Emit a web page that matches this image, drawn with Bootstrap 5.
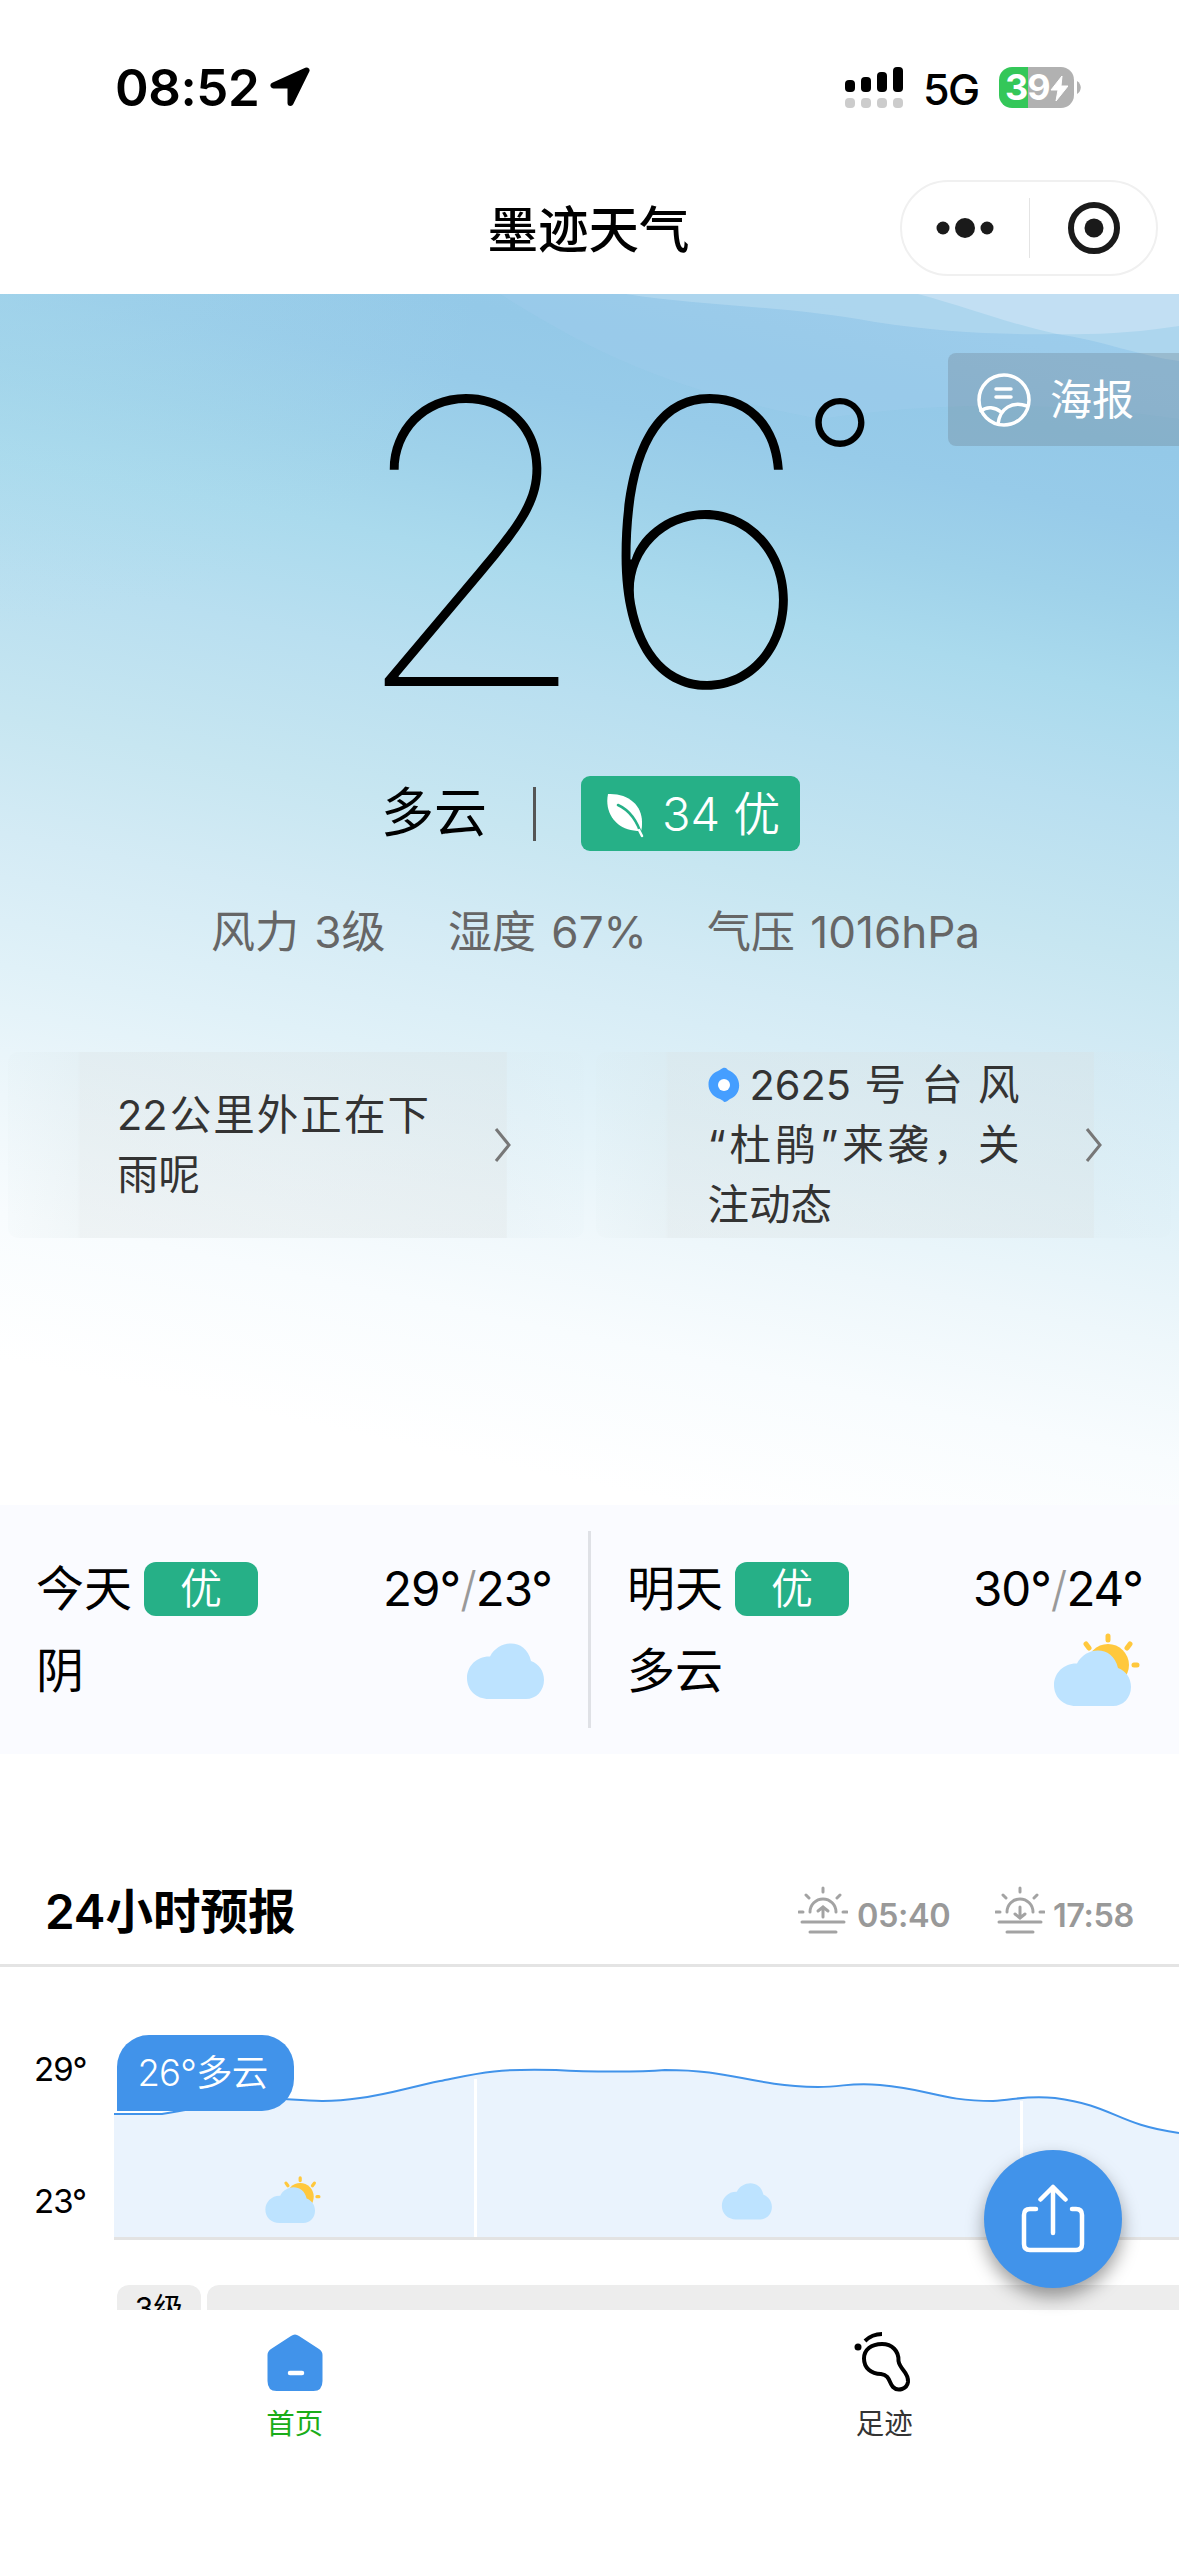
<!DOCTYPE html>
<html lang="zh-CN">
<head>
<meta charset="utf-8">
<meta name="viewport" content="width=device-width, initial-scale=1">
<title>墨迹天气</title>
<link href="https://cdn.jsdelivr.net/npm/bootstrap@5.3.0/dist/css/bootstrap.min.css" rel="stylesheet">
<style>
body{width:1179px;height:2556px;overflow:hidden;background:#fff;color:#000;font-family:Inter,"Noto Sans CJK SC",sans-serif;line-height:1}
svg{display:block;flex:none}
.text-nowrap-all *{white-space:nowrap}
.statusbar{height:160px;padding:67px 98px 0 115px}
.clock{font-size:51px;font-weight:600;line-height:42px;width:155px;letter-spacing:-.4px}
.net{font-size:43px;font-weight:450;line-height:44px;margin-left:18px;width:76px;letter-spacing:-1.500px}
.batt{width:75px;height:41px;border-radius:13px;background:linear-gradient(90deg,#34c759 39%,#b1b1b1 39%);color:#fff;font-size:36px;font-weight:700;line-height:41px;padding-left:6px;letter-spacing:-1px}
.titlebar{height:134px}
.titlebar h1{font-size:50.500px;font-weight:500;padding-top:43px;line-height:54px;margin:0 2px 0 0}
.capsule{top:20px;right:21px;width:258px;height:96px;border:2px solid #f0f0f0;border-radius:48px}
.capsule .bar{width:1px;height:60px;background:#e4e4e4}
.hero{height:1211px;background:radial-gradient(ellipse 480px 330px at 0 0,rgba(172,220,236,.38),rgba(172,220,236,0)),linear-gradient(192deg,#9ccdec 0%,#94c9e8 11%,#97cbe9 16%,#9fd2ea 22%,#aadaed 28%,#b9dff0 36%,#c7e6f1 46%,#d4ebf5 54%,#e0f1f8 63%,#eef7fb 72%,#f8fcfe 80%,#fff 90%)}
.poster{top:59px;right:0;width:231px;height:93px;background:rgba(90,100,110,.24);border-radius:8px 0 0 8px;color:#fff;font-size:42px;padding-left:29px;gap:19px}
.degrees{position:relative;height:482px;padding-top:48px;font-weight:100;font-size:396px;line-height:400px;padding-left:348px;letter-spacing:-1px}
.degrees .unit{font-size:160px;line-height:160px;font-weight:200;margin:36px 0 0 -12px;letter-spacing:0}
.now{height:75px;font-size:53px;padding-left:381px}
.now .sep{width:3px;height:54px;background:#555;margin:0 45px 0 46px}
.aqi{width:219px;height:75px;border-radius:9px;background:#26b087;color:#fff;font-size:47px;font-weight:350;padding-left:25px}
.facts{height:60px;margin-top:51px;padding-left:211px;font-size:44px;color:#666;word-spacing:3px}
.tips{margin-top:90px;padding:0 8px;gap:12px}
.tip{width:577px;height:186px;border-radius:10px;background:linear-gradient(90deg,rgba(215,228,230,.08) 0,rgba(215,226,228,.22) 12%,rgba(216,223,224,.32) 12.600%,rgba(216,223,224,.3) 50%,rgba(216,223,224,.34) 86.500%,rgba(215,230,236,.18) 86.700%,rgba(215,232,238,.08) 100%)}
.tip .copy{width:312px;margin-left:109px;font-size:41.500px;line-height:60px;color:#333}
.fill{text-align:justify;text-align-last:justify}
.week{height:249px;background:#fafbff}
.dayhalf{height:249px;padding:0 36px;width:588px}
.week .rule{width:3px;height:197px;background:#dfe1e6}
.dayhalf .r1{height:54px;margin-top:57px;font-size:48px}
.dayhalf .r2{height:60px;margin-top:25px;font-size:48px}
.temps{font-size:47.500px;letter-spacing:-1px}
.grade{width:114px;height:54px;border-radius:12px;background:#26b087;color:#fff;font-size:42px;font-weight:350;margin-left:12px}
.slash{color:#999;font-weight:300}
.head24{margin-top:110px;height:103px;border-bottom:3px solid #e4e4e4;padding:0 42px 0 45px}
.head24 h2{font-size:47.500px;font-weight:600;line-height:96px;margin:0}
.suntime{height:96px;font-size:32.500px;font-weight:600;color:#999;width:83px;padding-top:9px;letter-spacing:-.4px}
.chart{height:343px}
.axis{width:114px;font-size:33px;padding-left:34px;letter-spacing:-1px}
.callout{left:117px;top:68px;width:177px;height:76px;border-radius:32px 32px 32px 0;background:#4193ea;color:#fff;font-size:36.500px;font-weight:350;letter-spacing:-.8px;padding-right:6px}
.windrow{height:25px;margin-top:-25px;position:relative}
.pill{background:#ededed;height:60px;border-radius:12px 12px 0 0;font-size:30px}
.fab{left:984px;top:2150px;width:138px;height:138px;border-radius:50%;background:#4193ea;box-shadow:0 9px 18px rgba(0,0,0,.38)}
.tabs{height:246px;background:#fff}
.tabs .tab{padding-top:22px;width:50%;font-size:28.500px;gap:16px}
</style>
</head>
<body class="text-nowrap-all position-relative">
<header class="statusbar d-flex align-items-start">
  <div class="clock">08:52</div>
  <svg width="40" height="41" viewBox="0 0 40 41"><path d="M36.500 3.500 3.500 18.500H20.500V36z" fill="#000" stroke="#000" stroke-width="6" stroke-linejoin="round"/></svg>
  <svg class="ms-auto" width="60" height="41" viewBox="0 0 60 41"><g fill="#000"><rect y="13" width="10" height="12" rx="4"/><rect x="16" y="10" width="10" height="15" rx="4"/><rect x="32" y="5" width="10" height="20" rx="4"/><rect x="48" width="10" height="25" rx="4"/></g><g fill="#ccc"><rect y="31" width="10" height="10" rx="4"/><rect x="16" y="31" width="10" height="10" rx="4"/><rect x="32" y="31" width="10" height="10" rx="4"/><rect x="48" y="31" width="10" height="10" rx="4"/></g></svg>
  <div class="net">5G</div>
  <div class="batt d-flex">39<svg width="18" height="41" viewBox="0 0 18 41"><path d="M12 9 1 23h7L6 34 18 19h-7z" fill="#fff" stroke="#fff" stroke-linejoin="round"/></svg></div>
  <svg width="7" height="41" viewBox="0 0 7 41"><path d="M3 14c5 3 5 10 0 13z" fill="#b1b1b1"/></svg>
</header>
<nav class="titlebar position-relative">
  <h1 class="text-center">墨迹天气</h1>
  <div class="capsule position-absolute d-flex align-items-center">
    <svg width="127" height="60" viewBox="0 0 127 60"><g fill="#1a1a1a"><circle cx="41" cy="30" r="6.500"/><circle cx="63" cy="30" r="10"/><circle cx="85" cy="30" r="6.500"/></g></svg>
    <div class="bar"></div>
    <svg width="126" height="60" viewBox="0 0 126 60"><circle cx="64" cy="30" r="23" fill="none" stroke="#1a1a1a" stroke-width="6"/><circle cx="64" cy="30" r="9.500" fill="#1a1a1a"/></svg>
  </div>
</nav>
<main>
<section class="hero position-relative">
  <svg class="position-absolute top-0 end-0" width="700" height="130" viewBox="479 0 700 130">
    <path d="M500 0C580 50 660 95 820 125 950 105 1080 110 1179 125V0z" fill="#a6cfef" opacity=".25"/>
    <path d="M626 0C700 12 790 12 875 28 940 38 1000 41 1057 40 1100 46 1140 62 1179 67V0z" fill="#b0d7ef" opacity=".85"/>
    <path d="M918 0C970 14 1010 30 1057 40 1100 41 1140 38 1179 32V0z" fill="#c2dff3"/>
  </svg>
  <div class="degrees d-flex align-items-start"><span>26</span><span class="unit">°</span></div>
  <div class="poster position-absolute d-flex align-items-center">
    <svg width="54" height="54" viewBox="0 0 54 54" fill="none" stroke="#fff" stroke-width="3.500" stroke-linecap="round"><circle cx="27" cy="27" r="25"/><path d="M19 16h15M19 24h15M4 38c6-5 14-4 20 1M21 51c2-16 14-23 29-18"/></svg>
    <span>海报</span>
  </div>
  <div class="now d-flex align-items-center">
    <span>多云</span><div class="sep"></div>
    <div class="aqi d-flex align-items-center">
      <svg width="40" height="48" viewBox="0 0 40 48"><path d="M2 4c20-1 34 11 34 28 0 4 0 6-1 9-1 0-3 0-4 0C11 40-2 24 2 4z" fill="#fff"/><path d="M12 15c11 5 19 14 24 32" fill="none" stroke="#26b087" stroke-width="2.500" stroke-linecap="round"/><path d="M33 40l3 6" stroke="#fff" stroke-width="2.500" stroke-linecap="round"/></svg>
      <span class="ms-3">34 优</span>
    </div>
  </div>
  <div class="facts d-flex align-items-center"><span style="width:237px">风力 3级</span><span style="width:259px">湿度 67%</span><span>气压 1016hPa</span></div>
  <div class="tips d-flex">
    <div class="tip d-flex align-items-center">
      <div class="copy"><div class="fill">22公里外正在下</div><div>雨呢</div></div>
      <svg width="20" height="40" viewBox="0 0 20 40" style="margin-left:64px"><path d="M3 4 16 20 3 36" fill="none" stroke="#777" stroke-width="3"/></svg>
    </div>
    <div class="tip d-flex align-items-center">
      <div class="copy" style="margin-left:112px"><div class="d-flex align-items-center"><svg width="32" height="36" viewBox="0 0 32 36"><path d="M15 1c3-1 4 1 5 2 14 5 15 24 2 29-2 1-3 3-6 3-1-2-3-2-4-3C-3 27-3 9 10 4c2-1 3-2 5-3z" fill="#459eff"/><circle cx="16" cy="18" r="6" fill="#fff"/></svg><div class="fill flex-fill" style="margin-left:10px">2625 号 台 风</div></div><div class="fill">“杜鹃”来袭，关</div><div>注动态</div></div>
      <svg width="20" height="40" viewBox="0 0 20 40" style="margin-left:64px"><path d="M3 4 16 20 3 36" fill="none" stroke="#777" stroke-width="3"/></svg>
    </div>
  </div>
</section>
<section class="week d-flex align-items-center">
  <div class="dayhalf">
    <div class="r1 d-flex align-items-center"><span>今天</span><div class="grade d-flex align-items-center justify-content-center">优</div><span class="temps ms-auto">29°<span class="slash">/</span>23°</span></div>
    <div class="r2 d-flex align-items-center"><span>阴</span>
      <svg class="ms-auto" width="77" height="56" viewBox="-1 0 77 56" style="margin-right:8px"><path id="cloud" d="M21 56C8 56-1 47-1 35S9 13 22 13.500C31-4 58-5 63 18c8 3 13 10 13 19 0 11-8 19-18 19z" fill="#bde3ff"/></svg></div>
  </div>
  <div class="rule"></div>
  <div class="dayhalf">
    <div class="r1 d-flex align-items-center"><span>明天</span><div class="grade d-flex align-items-center justify-content-center">优</div><span class="temps ms-auto">30°<span class="slash">/</span>24°</span></div>
    <div class="r2 d-flex align-items-center"><span>多云</span>
      <svg class="ms-auto" width="87" height="76" viewBox="-1 0 87 76" style="margin-right:2px"><g id="sun"><circle cx="53" cy="32" r="21" fill="#ffc83d"/><path d="M53 3v4M31 11l3 4M75 11l-3 4M79 32h3" stroke="#ffc83d" stroke-width="5" stroke-linecap="round"/></g><use href="#cloud" y="17"/></svg></div>
  </div>
</section>
<section>
  <div class="head24 d-flex">
    <h2>24小时预报</h2>
    <svg class="ms-auto" width="50" height="48" viewBox="0 0 50 48" style="margin-top:22px" fill="none" stroke="#a3a3a3" stroke-width="3" stroke-linecap="round"><g id="horizon"><path d="M4 36h42M12 46h26M1 26h4M45 26h4M25 2v4M8 9l3 3M42 9l-3 3M12 26a13 13 0 0 1 26 0"/></g><path d="M25 31v-9M20 25l5-4 5 4"/></svg>
    <span class="suntime d-flex align-items-center ms-2" style="width:139px;padding-left:1px">05:40</span>
    <svg width="50" height="48" viewBox="0 0 50 48" style="margin-top:22px" fill="none" stroke="#a3a3a3" stroke-width="3" stroke-linecap="round"><use href="#horizon"/><path d="M25 21v10M20 28l5 4 5-4"/></svg>
    <span class="suntime d-flex align-items-center ms-2" style="width:84px">17:58</span>
  </div>
  <div class="chart position-relative d-flex">
    <div class="axis"><div style="margin-top:86px">29°</div><div style="margin-top:99px">23°</div></div>
    <svg width="1065" height="274" viewBox="114 1967 1065 274">
      <path d="M114 2114H162C200 2108 230 2100 262 2098 300 2099 318 2104 360 2098 390 2094 410 2087 440 2081 475 2074 495 2068 556 2070 590 2072 640 2072 665 2070 735 2070 745 2085 818 2087 845 2087 850 2082 880 2085 930 2089 940 2101 993 2101 1015 2100 1025 2095 1055 2098 1115 2106 1115 2124 1179 2133V2238H114z" fill="#eaf3fd"/>
      <path d="M114 2114H162C200 2108 230 2100 262 2098 300 2099 318 2104 360 2098 390 2094 410 2087 440 2081 475 2074 495 2068 556 2070 590 2072 640 2072 665 2070 735 2070 745 2085 818 2087 845 2087 850 2082 880 2085 930 2089 940 2101 993 2101 1015 2100 1025 2095 1055 2098 1115 2106 1115 2124 1179 2133" fill="none" stroke="#4193ea" stroke-width="2"/>
      <path d="M475.500 2079V2237M1021.500 2101V2237" stroke="#fff" stroke-width="3"/>
      <path d="M114 2238.500H1179" stroke="#e3e3e3" stroke-width="3"/>
      <g transform="translate(266 2176) scale(.645)"><use href="#sun"/><use href="#cloud" y="17"/></g>
      <use href="#cloud" transform="translate(722.500 2183) scale(.65)"/>
    </svg>
    <div class="callout position-absolute d-flex align-items-center justify-content-center">26°多云</div>
  </div>
  <div class="windrow d-flex overflow-hidden">
    <div class="pill text-center" style="width:84px;margin:0 6px 0 117px;padding-top:8px">3级</div><div class="pill flex-fill rounded-end-0"></div>
  </div>
</section>
</main>
<footer class="tabs d-flex">
  <div class="tab d-flex flex-column align-items-center" style="color:#1aad19">
    <svg width="56" height="62" viewBox="0 0 56 62"><path d="M24 4q4-3 8 0l20 13q3.500 2.500 3.500 6v26q0 10-9 10h-37Q.5 59 .5 49V23q0-3.500 3.500-6z" fill="#4193ea"/><path d="M23 41h12" stroke="#fff" stroke-width="4.500" stroke-linecap="round"/></svg>
    <span>首页</span>
  </div>
  <div class="tab d-flex flex-column align-items-center" style="color:#333">
    <svg width="60" height="62" viewBox="0 0 60 62" fill="none" stroke="#000" stroke-width="4"><circle cx="4" cy="15" r="3.500" fill="#000" stroke="none"/><path d="M11 9Q18 2 28 2"/><path d="M28 12C17 12 10 18 10 26.500c0 9.500 7 15.500 17 15.500 9 1 8 9 12 13 5 5 14 2 15-5 1-10-8-12-9.500-21C45 19 38 12 28 12z"/></svg>
    <span>足迹</span>
  </div>
</footer>
<button class="fab position-absolute border-0 p-0 d-flex align-items-center justify-content-center" aria-label="分享">
  <svg width="66" height="70" viewBox="0 0 66 70" fill="none" stroke="#fff" stroke-width="4.500" stroke-linecap="round" stroke-linejoin="round"><path d="M33 49V3M20.500 15.500 33 3l12.500 12.500M16 25H10q-6 0-6 6v29q0 6 6 6h46q6 0 6-6V31q0-6-6-6h-4"/></svg>
</button>
<script src="https://cdn.jsdelivr.net/npm/bootstrap@5.3.0/dist/js/bootstrap.bundle.min.js"></script>
</body>
</html>
